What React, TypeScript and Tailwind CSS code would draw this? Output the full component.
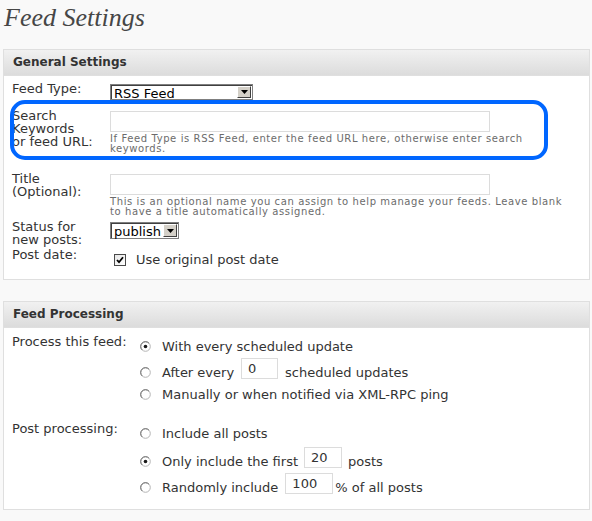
import type { ReactNode } from 'react';

function Panel({ title, children, overlay }: { title: string; children: ReactNode; overlay?: ReactNode }) {
    return (
        <div className="relative border border-[#dfdfdf] bg-white">
            <div className="border-b border-[#dfdfdf] bg-gradient-to-b from-[#f1f1f1] to-[#dcdcdc] px-[9px] pt-[6px] pb-[6px] text-[12px] leading-[13px] font-bold text-[#333]">
                {title}
            </div>
            {children}
            {overlay}
        </div>
    );
}

function Select({ value, width, height }: { value: string; width: string; height: string }) {
    return (
        <div className={`flex ${width} ${height} border border-[#7f7f7f] bg-white shadow-[inset_1px_1px_0_#404040]`}>
            <div className="flex-1 pl-[3px] pt-[2px] text-[13px] leading-[13px] text-black">{value}</div>
            <div className="my-[1px] mr-[1px] flex w-[14px] items-center justify-center border border-t-white border-l-white border-r-[#404040] border-b-[#404040] bg-[#d4d0c8]">
                <svg width="7" height="4" viewBox="0 0 7 4">
                    <path d="M0 0h7L3.5 4z" fill="#000" />
                </svg>
            </div>
        </div>
    );
}

function TextBox({ value, width }: { value?: string; width: string }) {
    return (
        <div className={`${width} h-[21px] shrink-0 border border-[#dcdcdc] bg-white px-[6px] pt-[3px] text-[13px] leading-[13px] text-[#333]`}>
            {value}
        </div>
    );
}

function Radio({ checked }: { checked?: boolean }) {
    return (
        <svg width="11" height="11" viewBox="0 0 11 11" className="shrink-0">
            <circle cx="5.5" cy="5.5" r="4.8" fill="#fff" stroke="#b4b4b4" />
            <path d="M2.1 8.9A4.8 4.8 0 0 1 8.9 2.1" stroke="#6e6e6e" fill="none" />
            {checked && <circle cx="5.5" cy="5.5" r="1.8" fill="#1a1a1a" />}
        </svg>
    );
}

function Option({ checked, className = '', children }: { checked?: boolean; className?: string; children: ReactNode }) {
    return (
        <div className={`flex items-end ${className}`}>
            <div className="flex h-[13px] w-[22px] items-center">
                <Radio checked={checked} />
            </div>
            {children}
        </div>
    );
}

export default function App() {
    return (
        <div className="min-h-[521px] bg-[#f9f9f9] pr-[2px] pl-[3px] font-['DejaVu_Sans',Verdana,sans-serif] text-[13px] leading-[13px] text-[#333]">
            {/* Page title */}
            <h2 className="pt-[3px] pl-[1px] font-['Liberation_Serif',Georgia,serif] text-[26px] leading-[30px] italic text-[#464646]">
                Feed Settings
            </h2>

            {/* General Settings */}
            <div className="mt-[16px]">
                <Panel
                    title="General Settings"
                    overlay={
                        <div className="pointer-events-none absolute top-[50px] left-[6px] h-[60px] w-[538px] rounded-[15px] border-[4px] border-[#0066ff]" />
                    }
                >
                    <div className="px-[8px] pt-[6px] pb-[13px]">
                        <div className="flex">
                            <div className="w-[98px] shrink-0">Feed Type:</div>
                            <div className="mt-[2px]">
                                <Select value="RSS Feed" width="w-[143px]" height="h-[16px]" />
                            </div>
                        </div>

                        <div className="mt-[9px] flex">
                            <div className="w-[98px] shrink-0">
                                Search
                                <br />
                                Keywords
                                <br />
                                or feed URL:
                            </div>
                            <div>
                                <div className="mt-[2px]">
                                    <TextBox width="w-[380px]" />
                                </div>
                                <p className="mt-[2px] text-[10px] leading-[10px] tracking-[0.6px] whitespace-nowrap text-[#6b6b6b]">
                                    If Feed Type is RSS Feed, enter the feed URL here, otherwise enter search
                                    <br />
                                    keywords.
                                </p>
                            </div>
                        </div>

                        <div className="mt-[18px] flex">
                            <div className="w-[98px] shrink-0">
                                Title
                                <br />
                                (Optional):
                            </div>
                            <div>
                                <div className="mt-[2px]">
                                    <TextBox width="w-[380px]" />
                                </div>
                                <p className="mt-[2px] text-[10px] leading-[10px] tracking-[0.6px] whitespace-nowrap text-[#6b6b6b]">
                                    This is an optional name you can assign to help manage your feeds. Leave blank
                                    <br />
                                    to have a title automatically assigned.
                                </p>
                            </div>
                        </div>

                        <div className="mt-[3px] flex">
                            <div className="w-[98px] shrink-0">
                                Status for
                                <br />
                                new posts:
                            </div>
                            <div className="mt-[2px]">
                                <Select value="publish" width="w-[69px]" height="h-[17px]" />
                            </div>
                        </div>

                        <div className="mt-[2px] flex">
                            <div className="w-[98px] shrink-0">Post date:</div>
                            <div className="mt-[5px] flex items-center">
                                <div className="ml-[4px] flex h-[12px] w-[12px] items-center justify-center border border-[#4a4a4a] bg-gradient-to-br from-[#e6e6e6] to-white">
                                    <svg width="8" height="8" viewBox="0 0 8 8">
                                        <path d="M1 4l2 2.2L7 1.2" stroke="#000" strokeWidth="1.8" fill="none" />
                                    </svg>
                                </div>
                                <span className="ml-[10px]">Use original post date</span>
                            </div>
                        </div>
                    </div>
                </Panel>
            </div>

            {/* Feed Processing */}
            <div className="mt-[21px]">
                <Panel title="Feed Processing">
                    <div className="px-[8px] pt-[7px] pb-[15px]">
                        <div className="flex">
                            <div className="w-[128px] shrink-0">Process this feed:</div>
                            <div className="mt-[5px] flex flex-col">
                                <Option checked>
                                    <span>With every scheduled update</span>
                                </Option>
                                <Option className="mt-[5px]">
                                    <span>After every</span>
                                    <div className="mx-[7px]">
                                        <TextBox value="0" width="w-[37px]" />
                                    </div>
                                    <span>scheduled updates</span>
                                </Option>
                                <Option className="mt-[9px]">
                                    <span>Manually or when notified via XML-RPC ping</span>
                                </Option>
                            </div>
                        </div>

                        <div className="mt-[21px] flex">
                            <div className="w-[128px] shrink-0">Post processing:</div>
                            <div className="mt-[5px] flex flex-col">
                                <Option>
                                    <span>Include all posts</span>
                                </Option>
                                <Option checked className="mt-[7px]">
                                    <span>Only include the first</span>
                                    <div className="mx-[6px]">
                                        <TextBox value="20" width="w-[38px]" />
                                    </div>
                                    <span>posts</span>
                                </Option>
                                <Option className="mt-[5px]">
                                    <span>Randomly include</span>
                                    <div className="mr-[2px] ml-[7px]">
                                        <TextBox value="100" width="w-[48px]" />
                                    </div>
                                    <span>% of all posts</span>
                                </Option>
                            </div>
                        </div>
                    </div>
                </Panel>
            </div>
        </div>
    );
}
